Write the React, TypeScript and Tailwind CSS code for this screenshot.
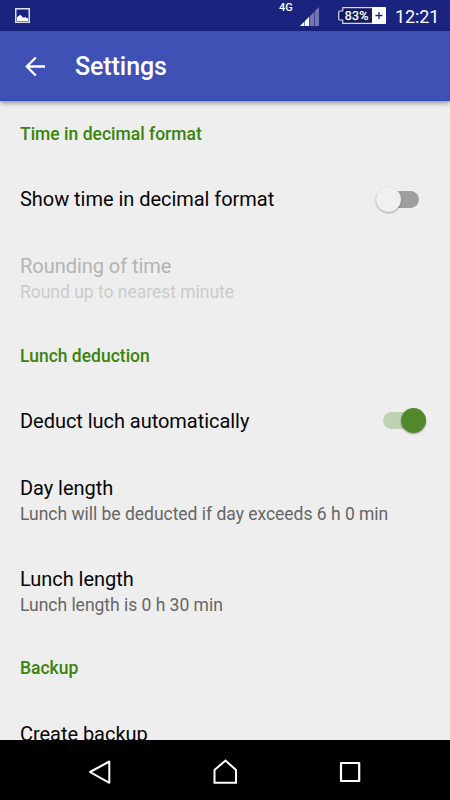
import React from "react";

function Category({ label, className }: { label: string; className: string }) {
  return (
    <div className={`h-16 shrink-0 px-5 text-[17.5px] leading-[22px] font-medium text-[#3b830c] ${className}`}>
      <span className="whitespace-nowrap">{label}</span>
    </div>
  );
}

function Preference({ title, summary, disabled = false }: { title: string; summary?: string; disabled?: boolean }) {
  return (
    <div className="h-[91px] shrink-0 px-5 pt-[21px] whitespace-nowrap">
      <div className={`text-[20px] leading-6 tracking-[-0.04px] ${disabled ? "text-[#b4b4b4]" : "text-[#060606]"}`}>{title}</div>
      {summary && (
        <div className={`mt-[3px] text-[17.5px] leading-[22px] tracking-[-0.02px] ${disabled ? "text-[#cbcbcb]" : "text-[#666666]"}`}>
          {summary}
        </div>
      )}
    </div>
  );
}

function Toggle({ on }: { on: boolean }) {
  return on ? (
    <div className="mr-[4px] flex h-[25px] w-[43px] items-center">
      <div className="flex h-[17px] w-[43px] items-center justify-end rounded-full bg-[#c0d2b4]">
        <div className="h-[25px] w-[25px] shrink-0 rounded-full bg-[#51882c] shadow-[0_1px_2px_rgba(0,0,0,0.35)]" />
      </div>
    </div>
  ) : (
    <div className="mr-[11px] flex h-[25px] w-[43px] items-center">
      <div className="flex h-[17px] w-[43px] items-center rounded-full bg-[#9f9f9f]">
        <div className="h-[25px] w-[25px] shrink-0 rounded-full bg-[#f0f0f0] shadow-[0_1px_2px_rgba(0,0,0,0.35)]" />
      </div>
    </div>
  );
}

function SwitchRow({ title, on, className }: { title: string; on: boolean; className: string }) {
  return (
    <div className={`flex shrink-0 items-center justify-between px-5 text-[20px] leading-6 tracking-[-0.04px] text-[#060606] ${className}`}>
      <span className="whitespace-nowrap">{title}</span>
      <Toggle on={on} />
    </div>
  );
}

function StatusBar() {
  return (
    <div className="flex h-[31px] shrink-0 items-center bg-[#1a237e] text-white">
      <svg className="ml-[15px]" width="15" height="15" viewBox="0 0 15 15">
        <rect x=".75" y=".75" width="13.5" height="13.5" fill="none" stroke="#dfe0ed" strokeWidth="1.5" />
        <path d="M2 13V9.3L3.5 8H4l1-1.5L6.5 8 8 9.5h1L10.5 9l1 1H13v3z" fill="#fff" />
      </svg>
      <span className="ml-auto h-[31px] w-[13px] pt-[1px] text-[11px] leading-[13px] font-medium">4G</span>
      <svg className="ml-[8px]" width="20" height="20" viewBox="0 0 20 20">
        <path d="M0 20 19 1V20z" fill="#7178b1" />
        <path d="M0 20 9 11V20z" fill="#fff" />
        <path d="M4.5 14V20M9.5 9V20M14.5 4V20" stroke="#1a237e" strokeWidth=".7" strokeOpacity=".8" />
      </svg>
      <div className="ml-[18px] flex h-[17px] w-[48px] items-center">
        <svg width="48" height="17" viewBox="0 0 48 17">
          <path d="M35 .7H4.7V4H1.5L.7 5V12l.8 1H4.7v3.3H35" fill="#141b58" stroke="#d5d7e8" strokeWidth="1.2" />
          <rect x="34" y="0" width="14" height="17" rx="1" fill="#fff" />
          <path d="M37.5 8.5h7M41 5v7" stroke="#1a237e" strokeWidth="1.3" />
          <text x="6.8" y="13" fontFamily="Roboto, sans-serif" fontSize="12.5" fontWeight="400" textLength="23.5" fill="#fff" stroke="#fff" strokeWidth=".25">83%</text>
        </svg>
      </div>
      <span className="mr-[12px] ml-[9px] w-[43px] pt-[2px] whitespace-nowrap text-[18px] leading-[31px] tracking-[-0.1px]">12:21</span>
    </div>
  );
}

export default function App() {
  return (
    <div className="flex h-[800px] w-[450px] flex-col overflow-hidden bg-[#eeeeee] font-[Roboto,sans-serif]">
      <StatusBar />
      <header className="z-10 flex h-[70px] shrink-0 items-center border-b border-[#3048b5] bg-[#3f51b5] shadow-[0_2px_5px_rgba(0,0,0,0.4)]">
        <svg className="ml-[25px]" width="20" height="20" viewBox="0 0 20 20" fill="none" stroke="#fff" strokeWidth="2.3">
          <path d="M20 10.5H2M10.8 1.5 1.8 10.5l9 9" />
        </svg>
        <h1 className="ml-[30px] pt-[3px] text-[25px] leading-[30px] font-medium tracking-[-0.08px] text-white">Settings</h1>
      </header>
      <main className="flex min-h-0 flex-1 flex-col overflow-hidden">
        <Category label="Time in decimal format" className="pt-[22px]" />
        <SwitchRow title="Show time in decimal format" on={false} className="h-[68px]" />
        <Preference title="Rounding of time" summary="Round up to nearest minute" disabled />
        <Category label="Lunch deduction" className="pt-[21px]" />
        <SwitchRow title="Deduct luch automatically" on className="h-[67px] pb-[2px]" />
        <Preference title="Day length" summary="Lunch will be deducted if day exceeds 6 h 0 min" />
        <Preference title="Lunch length" summary="Lunch length is 0 h 30 min" />
        <Category label="Backup" className="pt-[20px]" />
        <Preference title="Create backup" />
      </main>
      <nav className="flex h-[60px] shrink-0 items-center justify-between bg-black pt-[2px] pr-[88px] pl-[87px]">
        <svg width="24" height="26" viewBox="0 0 24 26" fill="none" stroke="#fff" strokeWidth="2">
          <path d="M22.3 3.5V24.8L3 14z" strokeLinejoin="round" />
        </svg>
        <svg width="24" height="26" viewBox="0 0 24 26" fill="none" stroke="#fff" strokeWidth="2">
          <path d="M1.5 24.8V12L12.5 2.5 23 12V24.8z" />
        </svg>
        <svg width="24" height="26" viewBox="0 0 24 26" fill="none" stroke="#fff" strokeWidth="2.2">
          <rect x="3" y="5" width="18.2" height="18" strokeLinejoin="round" />
        </svg>
      </nav>
    </div>
  );
}
